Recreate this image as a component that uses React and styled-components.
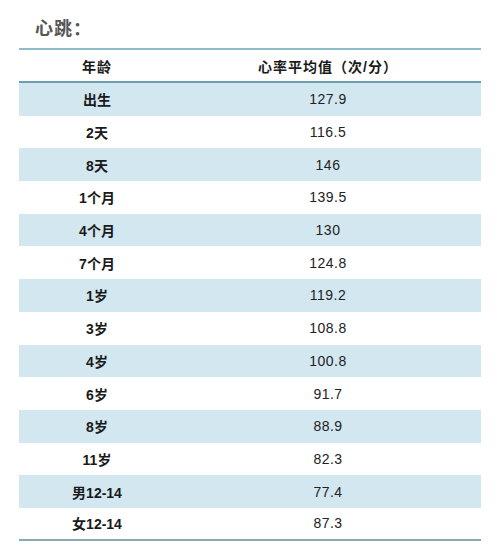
import React from "react";
import styled, { createGlobalStyle } from "styled-components";

const rows = [
  ["出生", "127.9"],
  ["2天", "116.5"],
  ["8天", "146"],
  ["1个月", "139.5"],
  ["4个月", "130"],
  ["7个月", "124.8"],
  ["1岁", "119.2"],
  ["3岁", "108.8"],
  ["4岁", "100.8"],
  ["6岁", "91.7"],
  ["8岁", "88.9"],
  ["11岁", "82.3"],
  ["男12-14", "77.4"],
  ["女12-14", "87.3"],
];

const App = () => {
  return (
    <>
      <GlobalStyle />
      <Page>
        <Title>心跳：</Title>
        <Table>
          <HeadRow>
            <HeadCell>年龄</HeadCell>
            <HeadCell>心率平均值（次/分）</HeadCell>
          </HeadRow>
          {rows.map(([age, rate], i) => (
            <Row key={age} striped={i % 2 === 0} last={i === rows.length - 1}>
              <AgeCell>{age}</AgeCell>
              <ValueCell>{rate}</ValueCell>
            </Row>
          ))}
        </Table>
      </Page>
    </>
  );
};

export default App;

const GlobalStyle = createGlobalStyle`
  body {
    margin: 0;
    background: #ffffff;
    font-family: "Liberation Sans", "Noto Sans CJK SC", sans-serif;
  }
`;

const Page = styled.div`
  width: 500px;
  height: 543px;
  padding: 17px 19px 0 19px;
  box-sizing: border-box;
`;

const Title = styled.div`
  height: 31px;
  padding-left: 16px;
  font-size: 18px;
  line-height: 24px;
  font-weight: bold;
  color: #555555;
  letter-spacing: 1px;
`;

const Table = styled.div`
  width: 462px;
  border-top: 2px solid #8fbccb;
`;

const HeadRow = styled.div`
  display: grid;
  grid-template-columns: 156px 1fr;
  height: 31px;
  align-items: center;
  border-bottom: 2px solid #6b9fb0;
`;

const HeadCell = styled.div`
  text-align: center;
  font-size: 14px;
  font-weight: bold;
  color: #1a1a1a;
  letter-spacing: 1px;
`;

const Row = styled.div`
  display: grid;
  grid-template-columns: 156px 1fr;
  height: ${(p) => (p.last ? "31px" : "32.7px")};
  align-items: center;
  background: ${(p) => (p.striped ? "#d2e7f0" : "#ffffff")};
  border-bottom: ${(p) => (p.last ? "2px solid #86a9b2" : "none")};
`;

const AgeCell = styled.div`
  text-align: center;
  font-size: 14px;
  font-weight: bold;
  color: #1a1a1a;
`;

const ValueCell = styled.div`
  text-align: center;
  font-size: 14px;
  color: #222222;
  letter-spacing: 0.5px;
`;
